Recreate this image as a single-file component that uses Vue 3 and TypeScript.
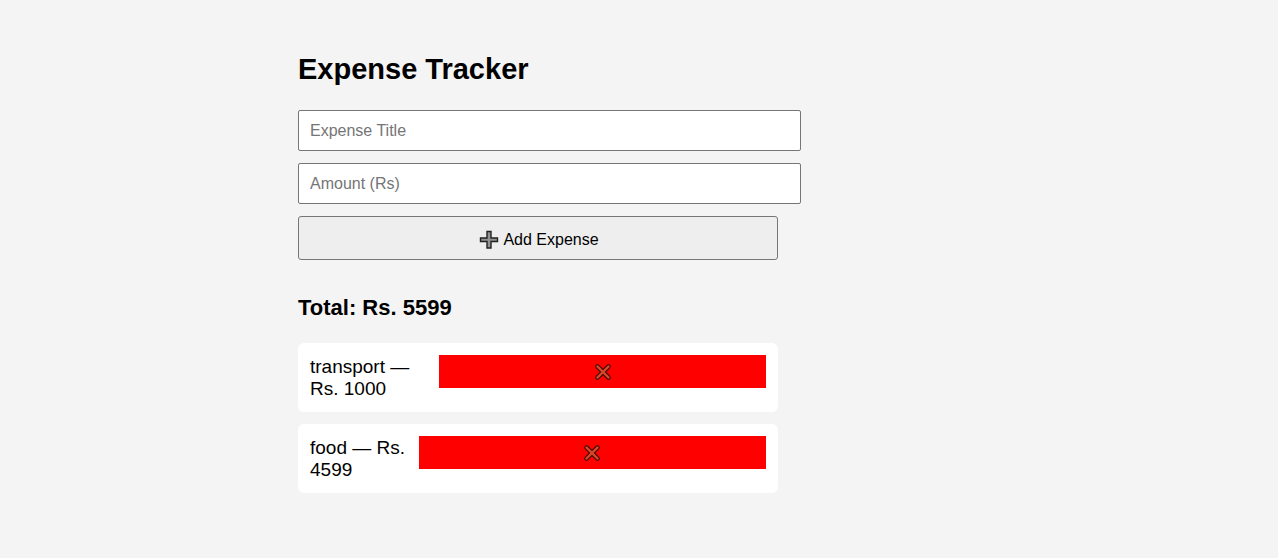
<script setup lang="ts">
import { computed, ref } from 'vue'

interface Expense {
  id: number
  title: string
  amount: number
}

const expenses = ref<Expense[]>([
  { id: 1, title: 'transport', amount: 1000 },
  { id: 2, title: 'food', amount: 4599 },
])
const title = ref('')
const amount = ref('')
let nextId = 3

const total = computed(() => expenses.value.reduce((sum, e) => sum + e.amount, 0))

function addExpense() {
  const value = Number(amount.value)
  if (!title.value.trim() || !value) return
  expenses.value.push({ id: nextId++, title: title.value.trim(), amount: value })
  title.value = ''
  amount.value = ''
}

function removeExpense(id: number) {
  expenses.value = expenses.value.filter((e) => e.id !== id)
}
</script>

<template>
  <main class="page">
    <div class="tracker">
      <h1>Expense Tracker</h1>
      <form class="form" @submit.prevent="addExpense">
        <input v-model="title" type="text" placeholder="Expense Title" aria-label="Expense Title" />
        <input v-model="amount" type="text" inputmode="numeric" placeholder="Amount (Rs)" aria-label="Amount (Rs)" />
        <button class="add" type="submit">
          <svg width="20" height="20" viewBox="0 0 20 20" aria-hidden="true">
            <path d="M8 1.500h4V8h6.500v3.500H12V18H8v-6.500H1.500V8H8z" fill="#929292" stroke="#222" stroke-width="1.400" />
          </svg>
          <span>Add Expense</span>
        </button>
      </form>
      <h2>Total: Rs. {{ total }}</h2>
      <ul class="list">
        <li v-for="e in expenses" :key="e.id">
          <span class="label">{{ e.title }} — Rs. {{ e.amount }}</span>
          <button class="remove" type="button" :aria-label="`Remove ${e.title}`" @click="removeExpense(e.id)">
            <svg width="18" height="18" viewBox="0 0 18 18" aria-hidden="true">
              <path d="M3.500 3.500l11 11M14.500 3.500l-11 11" fill="none" stroke="#4a0d05" stroke-width="4.600" stroke-linecap="round" />
              <path d="M3.500 3.500l11 11M14.500 3.500l-11 11" fill="none" stroke="#d9482b" stroke-width="2.400" stroke-linecap="round" />
            </svg>
          </button>
        </li>
      </ul>
    </div>
  </main>
</template>

<style>
body {
  background: #f4f4f4;
}
</style>

<style scoped>
.page {
  max-width: 682px;
  margin: 0 auto;
  padding: 48px 0;
  font-family: "Liberation Sans", Arial, sans-serif;
  color: #000;
}

.tracker {
  max-width: 480px;
}

h1 {
  margin: 0 0 20px;
  font-size: 29px;
  line-height: 42px;
}

.form {
  display: flex;
  flex-direction: column;
  align-items: flex-start;
  gap: 12px;
}

input {
  box-sizing: content-box;
  width: 100%;
  height: 39px;
  padding: 0 10px 0 11px;
  border: 1px solid #767676;
  border-radius: 2px;
  background: #fff;
  font: 16px "Liberation Sans", Arial, sans-serif;
}

input::placeholder {
  color: #757575;
}

.add {
  display: flex;
  align-items: center;
  justify-content: center;
  gap: 4px;
  width: 100%;
  height: 44px;
  padding: 3px 0 0 2px;
  border: 1px solid #767676;
  border-radius: 3px;
  background: #eee;
  color: #000;
  font: 16px "Liberation Sans", Arial, sans-serif;
}

h2 {
  margin: 34px 0 22px;
  font-size: 22px;
  line-height: 27px;
}

.list {
  display: flex;
  flex-direction: column;
  gap: 12px;
  margin: 0;
  padding: 0;
  list-style: none;
}

li {
  display: flex;
  align-items: flex-start;
  padding: 12px;
  border-radius: 6px;
  background: #fff;
  font-size: 19px;
  line-height: 22px;
}

.label {
  padding-top: 1px;
}

.remove {
  display: flex;
  align-items: center;
  justify-content: center;
  width: 100%;
  height: 33px;
  padding: 1px 0 0;
  border: 0;
  background: #f00;
}
</style>
